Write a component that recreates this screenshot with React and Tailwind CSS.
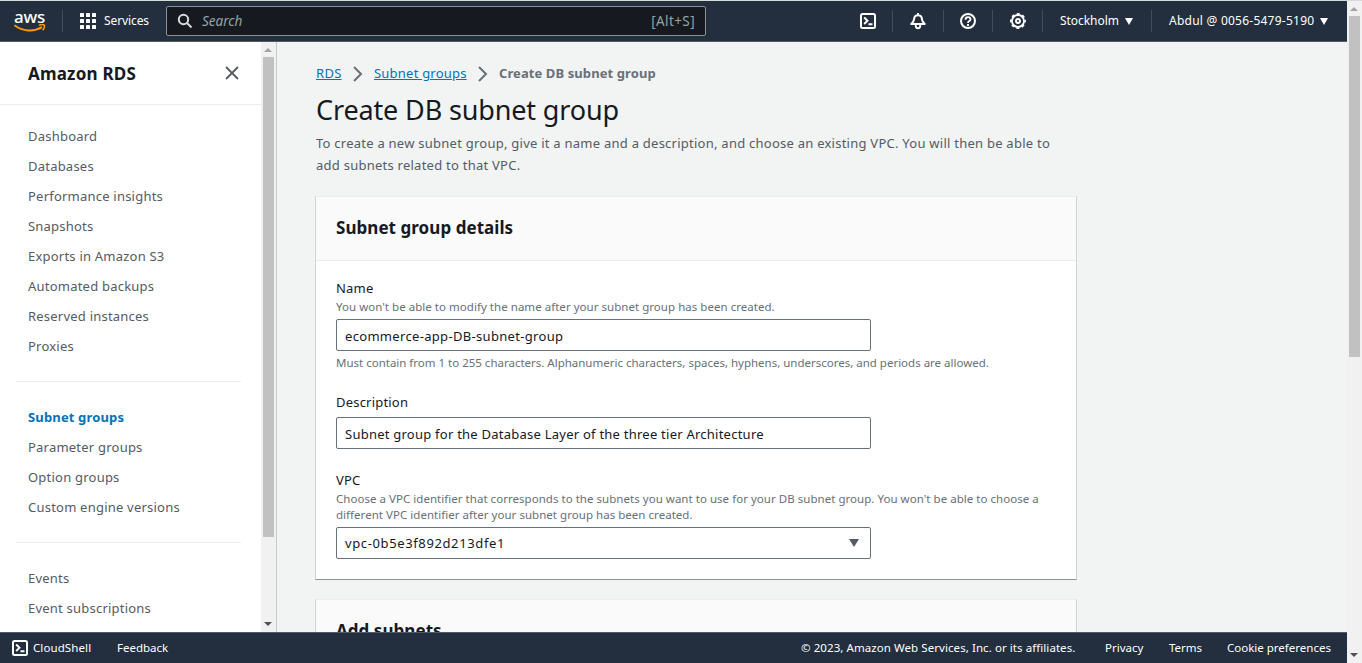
import React from "react";

const primaryLinks = [
  "Dashboard",
  "Databases",
  "Performance insights",
  "Snapshots",
  "Exports in Amazon S3",
  "Automated backups",
  "Reserved instances",
  "Proxies",
];
const groupLinks = ["Subnet groups", "Parameter groups", "Option groups", "Custom engine versions"];
const eventLinks = ["Events", "Event subscriptions"];

function Caret({ className, w = 9, h = 7 }) {
  return (
    <svg className={className} width={w} height={h} viewBox="0 0 10 8" preserveAspectRatio="none">
      <path d="M0 0h10L5 8z" fill="currentColor" />
    </svg>
  );
}

function ShellIcon() {
  return (
    <svg className="shrink-0" width="16" height="16" viewBox="0 0 16 16" fill="none" stroke="currentColor" strokeWidth="2">
      <rect x="1" y="1" width="14" height="14" rx="1.5" />
      <path d="M4.200 4.500 7.500 7.800l-3.300 3.200M8.500 11.200h4" strokeWidth="1.900" />
    </svg>
  );
}

function BellIcon() {
  return (
    <svg className="overflow-visible" width="16" height="16" viewBox="0 0 16 16" fill="none" stroke="currentColor" strokeWidth="2" strokeLinejoin="round">
      <path d="M8 0v2M1.200 11C3.500 9.200 3.800 8.600 4 6.300 4.200 3.700 5.500 2.200 8 2.200s3.800 1.500 4 4.100c.2 2.300.5 2.900 2.800 4.700z" />
      <path d="M5.800 12v1a2.200 2.200 0 0 0 4.400 0v-1" strokeWidth="1.900" />
    </svg>
  );
}

function HelpIcon() {
  return (
    <svg width="16" height="16" viewBox="0 0 16 16" fill="none" stroke="currentColor" strokeWidth="2">
      <circle cx="8" cy="8" r="7" />
      <path d="M5.500 6.700C5.500 5.100 6.500 4.200 8 4.200s2.500.9 2.500 2.200C10.500 8.200 8 8 8 10" strokeWidth="1.800" />
      <path d="M8 11v1.900" strokeWidth="1.900" />
    </svg>
  );
}

function GearIcon() {
  return (
    <svg width="16" height="16" viewBox="0 0 16 16" fill="none" stroke="currentColor">
      <circle cx="8" cy="8" r="6" strokeWidth="1.800" />
      <circle cx="8" cy="8" r="7.200" strokeWidth="1.500" strokeDasharray="3 2.655" strokeDashoffset="1.500" />
      <circle cx="8" cy="8" r="2" strokeWidth="1.900" />
    </svg>
  );
}

function Separator({ className = "" }) {
  return <div className={`h-[22px] w-px shrink-0 bg-[#414d5c] ${className}`} />;
}

function Logo() {
  return (
    <div className="flex w-[32px] flex-col items-center text-white">
      <span className="h-[15px] text-[17px] leading-[12px] font-medium tracking-[-0.3px]">aws</span>
      <svg className="mt-[-2px]" width="32" height="8" viewBox="0 0 32 8" fill="none">
        <path d="M.5 1.200C8.500 7.700 20 8 28 3.200" stroke="#f90" strokeWidth="2" />
        <path d="M25 1.400c2-.9 4.600-.9 5.300-.3.600.8-.2 3.700-1.700 5.200" stroke="#f90" strokeWidth="1.500" />
      </svg>
    </div>
  );
}

function Header() {
  return (
    <header className="flex h-[42px] shrink-0 items-center border-t border-b border-t-[#d5dbdb] border-b-[#545b64] bg-[#232f3e] text-[12px] text-white">
      <div className="flex w-[62px] justify-center pr-[3px]">
        <Logo />
      </div>
      <Separator />
      <svg className="ml-[17px]" width="16" height="16" viewBox="0 0 16 16" fill="white">
        {[0, 6, 12].map((y) => [0, 6, 12].map((x) => <rect key={`${x}-${y}`} x={x} y={y} width="4" height="4" rx=".5" />))}
      </svg>
      <span className="ml-2 w-[62px] tracking-[-0.1px]">Services</span>
      <div className="flex h-[30px] w-[540px] items-center rounded-[2px] border border-[#879596] bg-[#16191f] px-[10px] text-[#95a5a6]">
        <svg width="16" height="16" viewBox="0 0 16 16" fill="none" stroke="#d5dbdb" strokeWidth="2">
          <circle cx="6.500" cy="6.500" r="4.700" />
          <path d="m10 10 4.500 4.500" />
        </svg>
        <span className="ml-[9px] flex-1 pt-px text-[13.500px] italic">Search</span>
        <span className="pt-px text-[13.500px] tracking-[0.4px]">[Alt+S]</span>
      </div>
      <div className="ml-auto flex items-center">
        <ShellIcon />
        <Separator className="mx-4" />
        <span className="ml-px">
          <BellIcon />
        </span>
        <Separator className="mr-4 ml-[17px]" />
        <HelpIcon />
        <Separator className="mr-[17px] ml-4" />
        <GearIcon />
        <Separator className="mr-[17px] ml-4" />
        <span className="w-[60px] tracking-[-0.05px]">Stockholm</span>
        <Caret className="ml-[5px]" w={8} />
        <Separator className="mr-[17px] ml-[18px]" />
        <span className="w-[146px] tracking-[0.24px] whitespace-nowrap">Abdul @ 0056-5479-5190</span>
        <Caret className="mr-[19px] ml-[5px]" w={8} />
      </div>
    </header>
  );
}

function Scrollbar({ thumb }) {
  return (
    <div className="flex w-[15px] shrink-0 flex-col items-center bg-[#f1f1f1] pr-px">
      <Caret className="mt-[6px] mb-[5px] shrink-0 rotate-180 text-[#a3a3a3]" w={8} h={4} />
      <div className={`w-[11px] shrink-0 bg-[#c1c1c1] ${thumb}`} />
      <div className="flex-1" />
      <Caret className="mb-[6px] shrink-0 text-[#505050]" w={8} h={4} />
    </div>
  );
}

function NavList({ items, active }) {
  return (
    <ul className="px-7 text-[13px] leading-[30px]">
      {items.map((item) => (
        <li
          key={item}
          className={item === active ? "font-bold tracking-[0.15px] text-[#0073bb]" : "tracking-[0.22px] text-[#545b64]"}
        >
          {item}
        </li>
      ))}
    </ul>
  );
}

function Sidebar() {
  return (
    <aside className="flex w-[277px] shrink-0 border-r border-[#c4cbcb] bg-white">
      <nav className="flex-1 overflow-hidden">
        <div className="flex h-[63px] items-center justify-between border-b border-[#eaeded] pr-[22px] pl-7">
          <h2 className="pt-[2px] text-[17px] font-bold tracking-[0.2px] text-[#16191f]">Amazon RDS</h2>
          <svg width="14" height="14" viewBox="0 0 14 14" stroke="#545b64" strokeWidth="1.800">
            <path d="m1 1 12 12M13 1 1 13" />
          </svg>
        </div>
        <div className="pt-4">
          <NavList items={primaryLinks} />
          <hr className="mx-4 mt-[20px] mr-5 mb-5 border-[#eaeded]" />
          <NavList items={groupLinks} active="Subnet groups" />
          <hr className="mx-4 mt-[20px] mr-5 mb-5 border-[#eaeded]" />
          <NavList items={eventLinks} />
        </div>
      </nav>
      <Scrollbar thumb="h-[480px]" />
    </aside>
  );
}

function Chevron() {
  return (
    <svg className="mb-px" width="10" height="16" viewBox="0 0 10 16" fill="none" stroke="#687078" strokeWidth="2">
      <path d="m1 1 7 7-7 7" />
    </svg>
  );
}

function Card({ title, className = "", children }) {
  return (
    <section className={`w-[762px] border border-x-[#d0d5d5] border-t-[#eaeded] border-b-[#879596] bg-white ${className}`}>
      <div className="flex h-16 items-center border-b border-[#eaeded] bg-[#fafafa] px-5 pb-[2px]">
        <h2 className="text-[17px] font-bold tracking-[0.05px] text-[#16191f]">{title}</h2>
      </div>
      {children}
    </section>
  );
}

function Label({ children }) {
  return <div className="text-[13px] leading-[22px] tracking-[0.2px] text-[#16191f]">{children}</div>;
}

function Hint({ children, className = "tracking-[0.035px]" }) {
  return <div className={`text-[11.500px] leading-4 whitespace-nowrap text-[#687078] ${className}`}>{children}</div>;
}

function Field({ children, className = "" }) {
  return (
    <div className={`flex h-8 w-[535px] items-center rounded-[2px] border border-[#687078] px-2 text-[13px] text-[#16191f] ${className}`}>
      {children}
    </div>
  );
}

function Main() {
  return (
    <main className="flex-1 overflow-hidden bg-[#f2f3f3] pt-[21px] pl-[38px]">
      <div className="flex h-[22px] items-center pl-px text-[13px] text-[#0073bb]">
        <span className="w-[37px] tracking-[0.3px] underline">RDS</span>
        <Chevron />
        <span className="ml-[11px] w-[104px] tracking-[0.22px] whitespace-nowrap underline">Subnet groups</span>
        <Chevron />
        <span className="ml-[11px] font-bold tracking-[0.09px] whitespace-nowrap text-[#687078]">Create DB subnet group</span>
      </div>
      <h1 className="mt-[7px] pl-px text-[27px] leading-9 tracking-[-0.14px] text-[#16191f]">Create DB subnet group</h1>
      <p className="mt-[4px] pl-px text-[13px] leading-[22px] tracking-[0.247px] whitespace-nowrap text-[#545b64]">
        To create a new subnet group, give it a name and a description, and choose an existing VPC. You will then be able to
        <br />
        add subnets related to that VPC.
      </p>
      <Card title="Subnet group details" className="mt-5 h-[384px]">
        <div className="px-5 pt-4">
          <Label>Name</Label>
          <Hint>You won't be able to modify the name after your subnet group has been created.</Hint>
          <Field className="mt-1 pt-[3px] tracking-[0.32px]">ecommerce-app-DB-subnet-group</Field>
          <Hint className="mt-1 tracking-[-0.005px]">
            Must contain from 1 to 255 characters. Alphanumeric characters, spaces, hyphens, underscores, and periods are allowed.
          </Hint>
          <div className="mt-5">
            <Label>Description</Label>
            <Field className="mt-1 pt-[3px] tracking-[0.24px]">Subnet group for the Database Layer of the three tier Architecture</Field>
          </div>
          <div className="mt-5">
            <Label>VPC</Label>
            <Hint>
              Choose a VPC identifier that corresponds to the subnets you want to use for your DB subnet group. You won't be able to choose a
              <br />
              different VPC identifier after your subnet group has been created.
            </Hint>
            <Field className="mt-1 justify-between pt-[2px] tracking-[0.62px]">
              <span>vpc-0b5e3f892d213dfe1</span>
              <Caret className="mr-[3px] mb-[2px] text-[#545b64]" w={10} h={8} />
            </Field>
          </div>
        </div>
      </Card>
      <Card title="Add subnets" className="mt-[19px] h-[200px]" />
    </main>
  );
}

function Footer() {
  return (
    <footer className="flex h-[31px] shrink-0 items-center border-t border-[#545b64] bg-[#232f3e] pr-[17px] pl-3 text-[11.500px] whitespace-nowrap text-white">
      <ShellIcon />
      <span className="ml-[5px] w-[84px] tracking-[0.1px]">CloudShell</span>
      <span>Feedback</span>
      <span className="ml-auto w-[304px] tracking-[0.07px]">© 2023, Amazon Web Services, Inc. or its affiliates.</span>
      <span className="w-[64px]">Privacy</span>
      <span className="w-[58px]">Terms</span>
      <span className="w-[103px]">Cookie preferences</span>
    </footer>
  );
}

export default function App() {
  return (
    <div className="flex h-[663px] w-[1362px] overflow-hidden font-['Noto_Sans',sans-serif]">
      <div className="flex w-[1347px] shrink-0 flex-col">
        <Header />
        <div className="flex min-h-0 flex-1">
          <Sidebar />
          <Main />
        </div>
        <Footer />
      </div>
      <div className="flex border-t border-[#d5dbdb]">
        <Scrollbar thumb="h-[341px]" />
      </div>
    </div>
  );
}
